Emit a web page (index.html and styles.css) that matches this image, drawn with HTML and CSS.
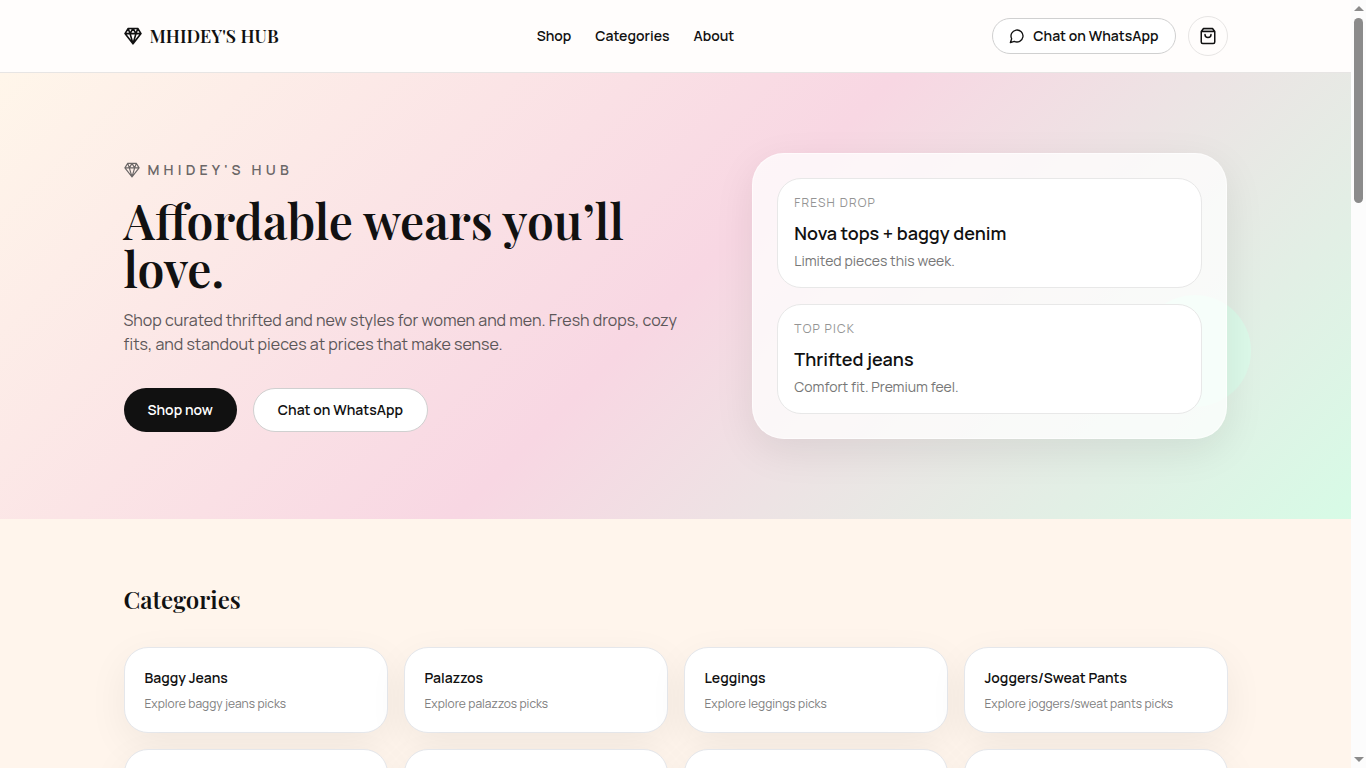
FILE: index.html
```html
<!DOCTYPE html>
<html lang="en">
<head>
    <meta charset="UTF-8">
    <meta name="viewport" content="width=device-width, initial-scale=1">
    <title>Mhidey's Hub</title>
    <link rel="stylesheet" href="styles.css">
</head>
<body>
<!-- shared icons -->
<svg class="sprite" aria-hidden="true">
    <symbol id="gem" viewBox="0 0 18 18">
        <path d="M4.2 1.5h9.6L17 6.6 9 16.8 1 6.6zM1 6.6h16M9 1.5 6 6.6l3 10.2 3-10.2zM4.2 1.5 6 6.6M13.8 1.5 12 6.6"/>
    </symbol>
    <symbol id="chat" viewBox="0 0 24 24">
        <path d="M7.9 20A9 9 0 1 0 4 16.1L2 22Z"/>
    </symbol>
    <symbol id="bag" viewBox="0 0 24 24">
        <path class="bag-top" d="M6 2h12l3 4.5H3z"/>
        <path d="M6 2 3 6v14a2 2 0 0 0 2 2h14a2 2 0 0 0 2-2V6l-3-4ZM3 6h18M16 10a4 4 0 0 1-8 0"/>
    </symbol>
</svg>

<header class="header">
    <div class="container header-row">
        <a class="brand" href="#"><svg class="icon icon-gem"><use href="#gem"/></svg>MHIDEY'S HUB</a>
        <nav class="nav">
            <a href="#shop">Shop</a>
            <a href="#categories">Categories</a>
            <a href="#about">About</a>
        </nav>
        <div class="actions">
            <a class="btn btn-small" href="#chat"><svg class="icon icon-chat"><use href="#chat"/></svg>Chat on WhatsApp</a>
            <button class="cart" type="button" aria-label="Open cart"><svg class="icon icon-bag"><use href="#bag"/></svg></button>
        </div>
    </div>
</header>

<main>
    <section class="hero">
        <div class="container hero-grid">
            <div class="hero-text">
                <p class="eyebrow"><svg class="icon icon-gem-small"><use href="#gem"/></svg>MHIDEY'S HUB</p>
                <h1>Affordable wears you’ll love.</h1>
                <p class="lead">Shop curated thrifted and new styles for women and men. Fresh drops, cozy fits, and standout pieces at prices that make sense.</p>
                <div class="hero-buttons">
                    <a class="btn btn-dark" href="#shop">Shop now</a>
                    <a class="btn" href="#chat">Chat on WhatsApp</a>
                </div>
            </div>
            <div class="hero-side">
                <div class="panel">
                    <article class="drop">
                        <p class="drop-label">FRESH DROP</p>
                        <h2>Nova tops + baggy denim</h2>
                        <p class="drop-note">Limited pieces this week.</p>
                    </article>
                    <article class="drop">
                        <p class="drop-label">TOP PICK</p>
                        <h2>Thrifted jeans</h2>
                        <p class="drop-note">Comfort fit. Premium feel.</p>
                    </article>
                </div>
            </div>
        </div>
    </section>

    <section class="container categories" id="categories">
        <h2>Categories</h2>
        <div class="category-grid">
            <a class="category" href="#baggy-jeans"><strong>Baggy Jeans</strong><span>Explore baggy jeans picks</span></a>
            <a class="category" href="#palazzos"><strong>Palazzos</strong><span>Explore palazzos picks</span></a>
            <a class="category" href="#leggings"><strong>Leggings</strong><span>Explore leggings picks</span></a>
            <a class="category" href="#joggers"><strong>Joggers/Sweat Pants</strong><span>Explore joggers/sweat pants picks</span></a>
            <div class="category"></div>
            <div class="category"></div>
            <div class="category"></div>
            <div class="category"></div>
        </div>
    </section>
</main>

<div class="scrollbar" aria-hidden="true">
    <i class="arrow-up"></i>
    <i class="thumb"></i>
    <i class="arrow-down"></i>
</div>
</body>
</html>
```
FILE: styles.css
```css
* {
    box-sizing: border-box;
}

body, h1, h2, p {
    margin: 0;
}

html {
    height: 100%;
    overflow: hidden;
}

body {
    height: 100%;
    overflow: hidden;
    padding-right: 15px;
    background: #fff5ec;
    color: #111;
    font: 14px/20px Manrope, Inter, sans-serif;
}

a {
    color: inherit;
    text-decoration: none;
}

.container {
    max-width: 1152px;
    margin: 0 auto;
    padding: 0 24px;
}

.sprite {
    position: absolute;
    width: 0;
    height: 0;
}

.icon {
    flex: none;
    fill: none;
    stroke: currentColor;
    stroke-width: 2;
    stroke-linecap: round;
    stroke-linejoin: round;
}

.icon-gem {
    width: 18px;
    height: 18px;
    stroke-width: 1.6;
}

.icon-gem-small {
    width: 16px;
    height: 16px;
    stroke-width: 1.3;
}

.icon-chat {
    width: 16px;
    height: 16px;
}

.icon-bag {
    width: 18px;
    height: 18px;
}

.bag-top {
    fill: #ccc;
    stroke: none;
}

/* header */
.header {
    background: #fffdfc;
    border-bottom: 1px solid #e7e5e4;
}

.header-row {
    display: flex;
    align-items: center;
    justify-content: space-between;
    height: 72px;
}

.brand {
    display: flex;
    align-items: center;
    gap: 8px;
    font: 600 18px/28px "Playfair Display", "Liberation Serif", serif;
}

.nav {
    display: flex;
    gap: 24px;
    font-weight: 600;
}

.actions {
    display: flex;
    align-items: center;
    gap: 12px;
}

.btn {
    display: inline-flex;
    align-items: center;
    gap: 8px;
    height: 44px;
    padding: 0 24px;
    border: 1px solid #d0d0d0;
    border-radius: 22px;
    background: #fff;
    font-weight: 600;
    white-space: nowrap;
}

.btn-small {
    height: 36px;
    padding: 0 16px;
}

.btn-dark {
    border: 0;
    background: #111;
    color: #fff;
}

.cart {
    display: flex;
    align-items: center;
    justify-content: center;
    width: 40px;
    height: 40px;
    padding: 0;
    border: 1px solid #e7e5e4;
    border-radius: 50%;
    background: transparent;
    color: #111;
}

/* hero */
.hero {
    background: linear-gradient(135deg, #fff6ea 0%, #f8d7e3 50%, #d7fbe6 100%);
}

.hero-grid {
    display: grid;
    grid-template-columns: 11fr 9fr;
    align-items: center;
    gap: 48px;
    padding-top: 80px;
    padding-bottom: 80px;
}

.eyebrow {
    display: flex;
    align-items: center;
    gap: 8px;
    color: #6b6767;
    font-weight: 600;
    letter-spacing: 0.3em;
}

h1 {
    margin-top: 16px;
    font: 600 48px/48px "Playfair Display", "Liberation Serif", serif;
}

.lead {
    margin-top: 16px;
    color: #5c5759;
    font-size: 16px;
    line-height: 24px;
}

.hero-buttons {
    display: flex;
    gap: 16px;
    margin-top: 32px;
}

.hero-side {
    position: relative;
}

/* mint bubble behind the panel */
.hero-side::before {
    content: "";
    position: absolute;
    right: -24px;
    bottom: 32px;
    width: 112px;
    height: 112px;
    border-radius: 50%;
    background: #dcf9e9;
}

.panel {
    position: relative;
    display: grid;
    gap: 16px;
    padding: 24px;
    border: 1px solid rgba(255, 255, 255, .6);
    border-radius: 32px;
    background: rgba(255, 255, 255, .75);
    box-shadow: 0 12px 40px rgba(17, 17, 17, .08);
}

.drop {
    padding: 14px 16px 16px;
    border: 1px solid #e8e8e8;
    border-radius: 24px;
    background: #fff;
}

.drop-label {
    color: #949494;
    font-size: 12px;
    letter-spacing: 0.1em;
}

.drop h2 {
    margin-top: 6px;
    font-size: 18px;
    font-weight: 600;
    line-height: 28px;
}

.drop-note {
    margin-top: 4px;
    color: #777;
}

/* categories */
.categories {
    padding-top: 64px;
}

.categories h2 {
    font: 600 24px/32px "Playfair Display", "Liberation Serif", serif;
}

.category-grid {
    display: grid;
    grid-template-columns: repeat(4, 1fr);
    gap: 16px;
    margin-top: 32px;
}

.category {
    display: flex;
    flex-direction: column;
    gap: 8px;
    min-height: 86px;
    padding: 20px;
    border: 1px solid #e5e7eb;
    border-radius: 24px;
    background: #fff;
    box-shadow: 0 12px 40px rgba(17, 17, 17, .06);
}

.category strong {
    font-weight: 600;
}

.category span {
    color: #808080;
    font-size: 12px;
    line-height: 16px;
}

/* window scrollbar */
.scrollbar {
    position: fixed;
    top: 0;
    right: 0;
    bottom: 0;
    display: flex;
    flex-direction: column;
    align-items: center;
    width: 15px;
    padding: 6px 0;
    background: #fcfcfc;
}

.arrow-up, .arrow-down {
    border: 5px solid transparent;
    border-top-width: 0;
    border-bottom: 5px solid #8b8b8b;
}

.arrow-down {
    margin-top: auto;
    transform: rotate(180deg);
}

.thumb {
    width: 9px;
    height: 185px;
    margin-top: 7px;
    border-radius: 5px;
    background: #8b8b8b;
}
```
